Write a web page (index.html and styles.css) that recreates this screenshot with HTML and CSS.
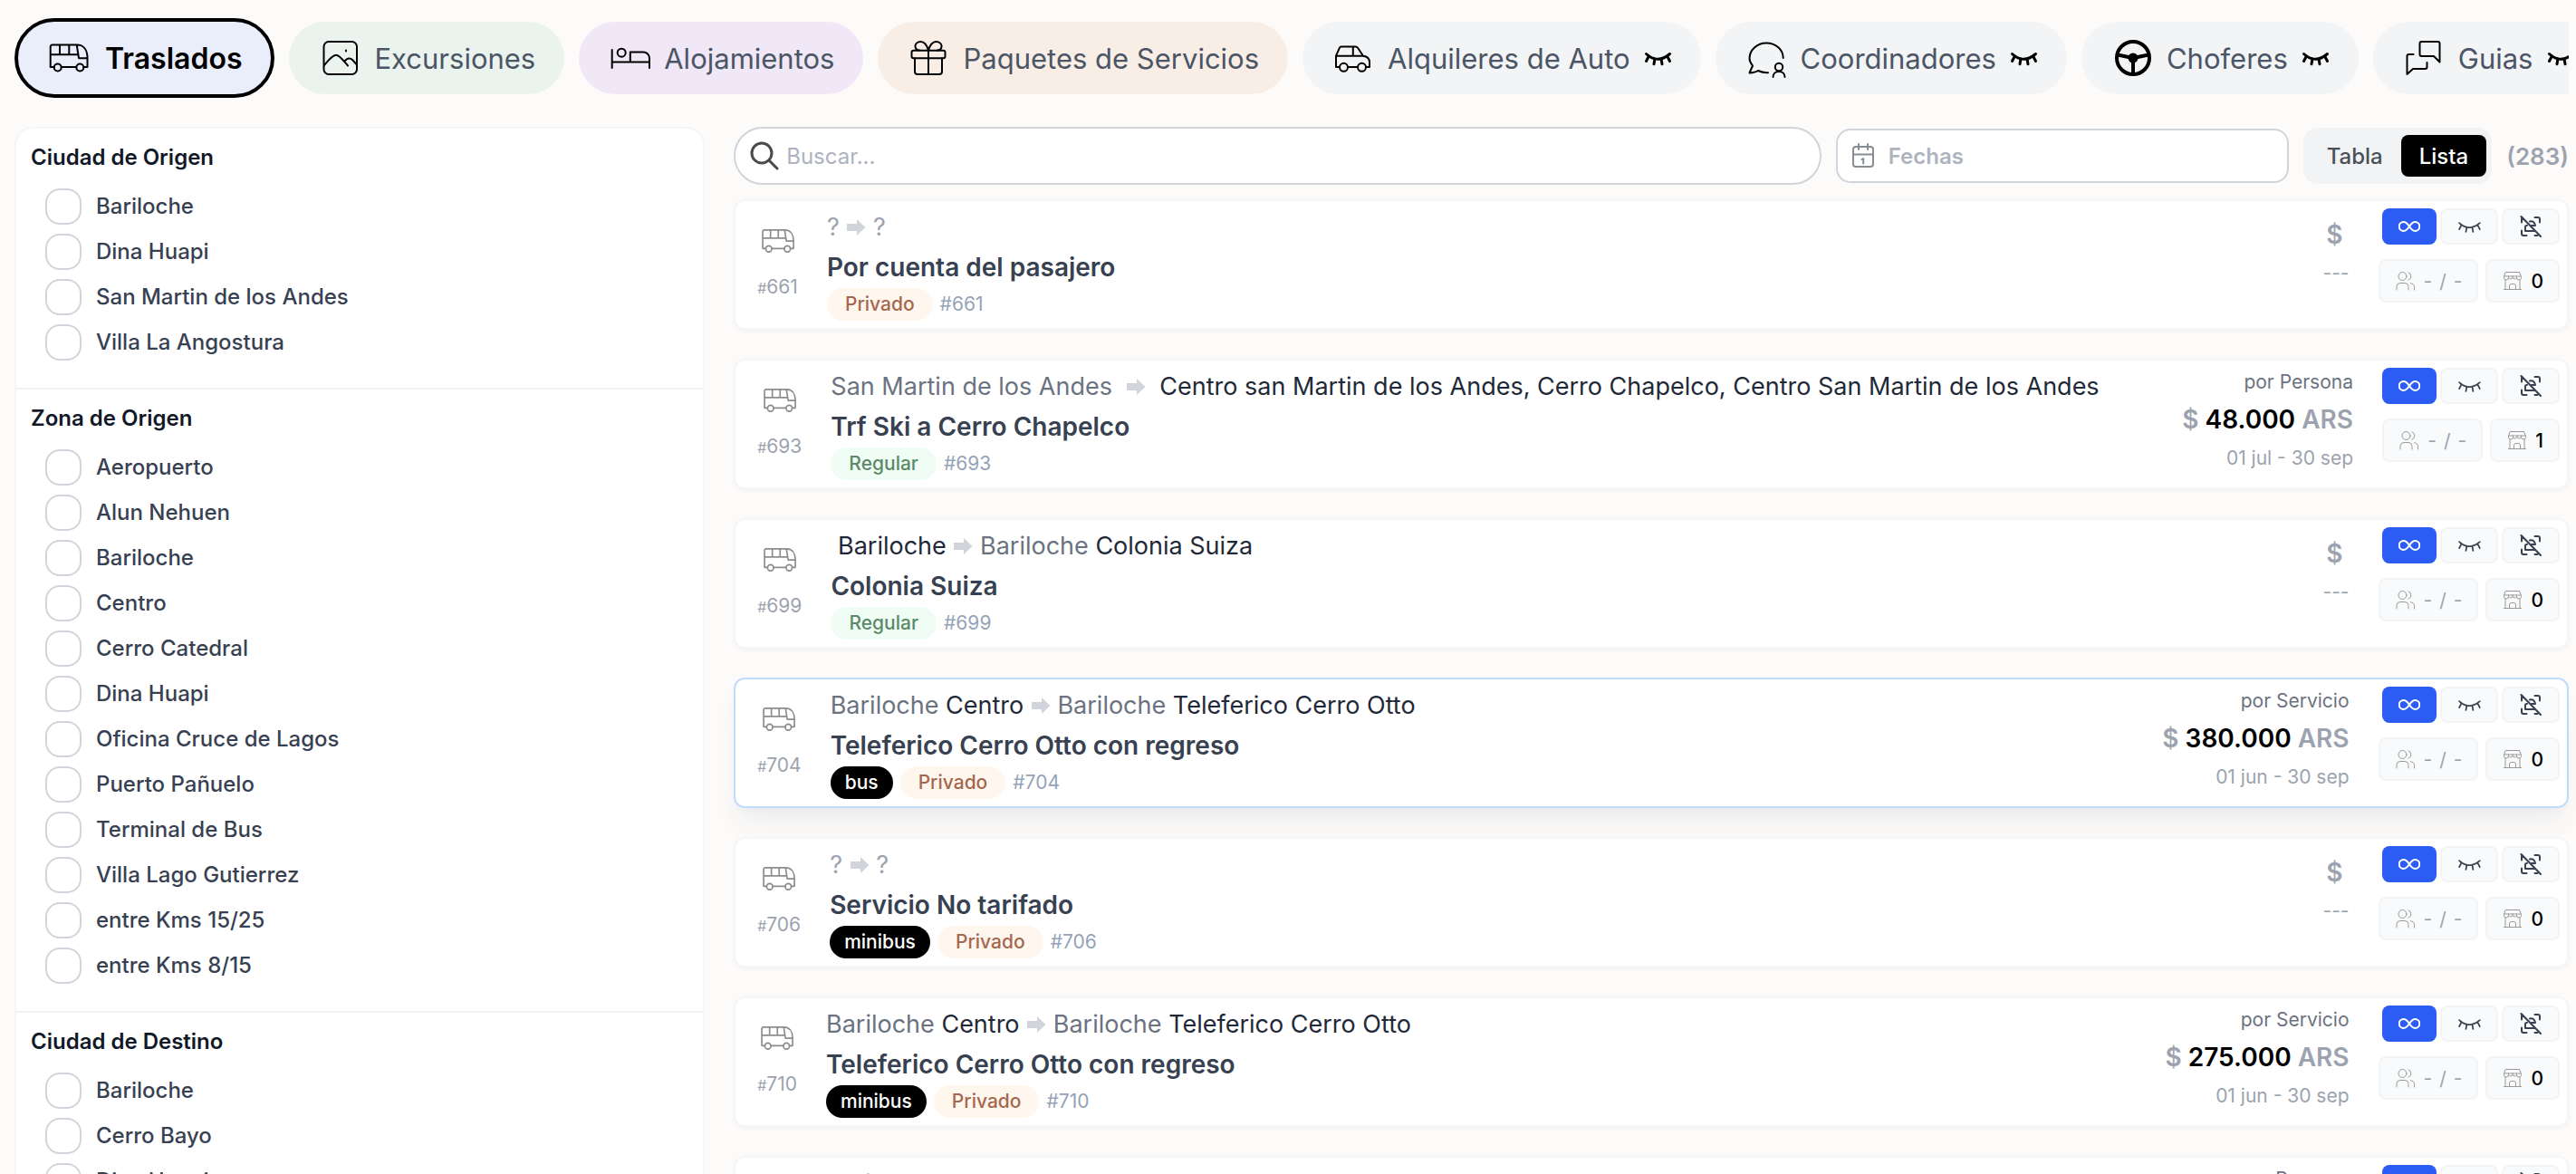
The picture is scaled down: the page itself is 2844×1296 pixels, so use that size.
FILE: index.html
```html
<!DOCTYPE html>
<html lang="es">
<head>
<meta charset="utf-8">
<meta name="viewport" content="width=device-width, initial-scale=1">
<title>Traslados</title>
<link rel="stylesheet" href="styles.css">
</head>
<body>
<svg class="sprite" aria-hidden="true">
  <symbol id="bus" viewBox="0 0 48 48"><path d="M7.7 34H3.7V11.5a2 2 0 0 1 2-2H33c8 0 11.5 6.500 11.500 14.500v10h-4.200M15.700 34h16.600M3.700 20.300h30.500M14 9.500v10.800M24.300 9.500v10.800M32.700 9.500l2.300 14.700h9.500"/><circle cx="11.700" cy="34.500" r="4"/><circle cx="36.300" cy="34.500" r="4"/></symbol>
  <symbol id="image" viewBox="0 0 48 48"><rect x="6.500" y="6" width="36.500" height="36" rx="5.500"/><path d="M7 32c4-5 9-11.300 13-11.300S29 28 33 32.500M29.500 27.500c3-3.500 6-4 8.500-1.500l5 5.500"/><path d="M31 15.500v1"/></symbol>
  <symbol id="bed" viewBox="0 0 48 48"><path d="M4.700 15v20M4.700 28.500H46M24.800 28.500V17.500h14.500a6.700 6.700 0 0 1 6.700 6.700V35"/><circle cx="15.200" cy="18.200" r="4.500"/></symbol>
  <symbol id="gift" viewBox="0 0 48 48"><rect x="5.500" y="15.800" width="37" height="8.400" rx="2"/><path d="M9 24.200V39a3 3 0 0 0 3 3h24a3 3 0 0 0 3-3V24.200M24 15.800V42M24 15.500C22 9 19 6 15.500 6S9 8.500 9.500 11.500s3 4 4.500 4M24 15.500C26 9 29 6 32.500 6S39 8.500 38.500 11.500s-3 4-4.500 4"/></symbol>
  <symbol id="car" viewBox="0 0 48 48"><path d="M8.500 34H5V21.700l4-9a2 2 0 0 1 2-1.300h15.500a3 3 0 0 1 2.500 1.300l6 9c4 .5 7 3 7 7V34h-3.500M18.500 34h10M5 21.700h30M23.800 11.400v10.300"/><circle cx="13.500" cy="34.300" r="4.500"/><circle cx="33.500" cy="34.300" r="4.500"/></symbol>
  <symbol id="coordinator" viewBox="0 0 48 48"><path d="M42.700 24C42.500 14 34 7.500 24 7.500S5.500 15 5.500 24.500c0 3 1.500 5.500 3.500 8L5.500 40.500c4-.2 7-.8 9.500-2.500 3 1.500 6.500 2.500 11 2.200M31.500 45c0-3.500 2.500-6 6.500-6s6.500 2.500 6.500 6"/><circle cx="38" cy="34" r="4.200"/></symbol>
  <symbol id="wheel" viewBox="0 0 48 48"><circle cx="25" cy="24" r="18" stroke-width="4"/><circle cx="25" cy="24" r="5.500" fill="currentColor" stroke="none"/><path stroke-width="4" d="M8 20.500l13 2.800M42 20.500l-13 2.800M25 27v14"/></symbol>
  <symbol id="chat" viewBox="0 0 48 48"><path d="M21.500 6H39.500a2 2 0 0 1 2 2v20.500L35 22H21.500a2 2 0 0 1-2-2V8a2 2 0 0 1 2-2zM12.500 20H7.500a2 2 0 0 0-2 2v20L12 36h13.500a2 2 0 0 0 2-2v-5"/></symbol>
  <symbol id="eye-off" viewBox="0 0 32 32"><path d="M3.500 11.500q12.500 11.500 26 0M6.500 13.800L3.500 19.500M13 16.700l-1 6M20 16.700l1 6M26.500 13.800l3 5.700"/></symbol>
  <symbol id="search" viewBox="0 0 32 32"><circle cx="13" cy="13" r="11"/><path d="M21 21l9 9"/></symbol>
  <symbol id="calendar" viewBox="0 0 28 28"><rect x="3" y="4" width="22" height="22" rx="3"/><path d="M3 12.500h22M9 1v6M19 1v6M12.500 18l1.700-1v5.500"/></symbol>
  <symbol id="infinity" viewBox="0 0 24 24"><path d="M12 12c-2-3-4-5-6.300-5a5 5 0 0 0 0 10c2.300 0 4.300-2 6.300-5s4-5 6.300-5a5 5 0 0 1 0 10c-2.300 0-4.300-2-6.300-5z"/></symbol>
  <symbol id="no-scan" viewBox="0 0 24 24"><path d="M1.500 1l21.500 22M16.500 2h3.500a2 2 0 0 1 2 2v3.500M2 16.500V20a2 2 0 0 0 2 2h3.500M2 2.500v5M16.500 22h3M11 6.500c3-1 5.500 1 6 4.500h-4M8 11h-.5a1.500 1.500 0 0 0-1.500 1.500v4.500h10.500"/></symbol>
  <symbol id="people" viewBox="0 0 24 24"><circle cx="8.500" cy="7" r="4.500"/><path d="M2 22v-3.500a4 4 0 0 1 4-4h5a4 4 0 0 1 4 4V22M15 2.800a4.500 4.500 0 0 1 0 8.400M17.500 14.700a4 4 0 0 1 4 4V22"/></symbol>
  <symbol id="store" viewBox="0 0 24 24"><path d="M4.500 2.500h15l2 5v1a2.500 2.500 0 0 1-5 0 2.500 2.500 0 0 1-4.500 0 2.500 2.500 0 0 1-4.500 0 2.500 2.500 0 0 1-5 0v-1zM2.500 7h19M7.500 7v2M12 7v2M16.500 7v2M4 11.500V21.500M20 11.500V21.500M2.500 21.500h19M8.500 21v-3.500a2 2 0 0 1 2-2h3a2 2 0 0 1 2 2V21"/></symbol>
  <symbol id="arrow" viewBox="0 0 22 18"><path d="M1 5h11V0l9.500 9-9.500 9v-5H1z"/></symbol>
</svg>

<nav class="tabs" aria-label="Servicios">
  <button class="tab tab-blue tab-active" type="button"><svg class="tab-icon"><use href="#bus"/></svg>Traslados</button>
  <button class="tab tab-green" type="button"><svg class="tab-icon"><use href="#image"/></svg>Excursiones</button>
  <button class="tab tab-purple" type="button"><svg class="tab-icon"><use href="#bed"/></svg>Alojamientos</button>
  <button class="tab tab-orange" type="button"><svg class="tab-icon"><use href="#gift"/></svg>Paquetes de Servicios</button>
  <button class="tab" type="button"><svg class="tab-icon"><use href="#car"/></svg>Alquileres de Auto<svg class="tab-eye"><use href="#eye-off"/></svg></button>
  <button class="tab" type="button"><svg class="tab-icon"><use href="#coordinator"/></svg>Coordinadores<svg class="tab-eye"><use href="#eye-off"/></svg></button>
  <button class="tab" type="button"><svg class="tab-icon"><use href="#wheel"/></svg>Choferes<svg class="tab-eye"><use href="#eye-off"/></svg></button>
  <button class="tab" type="button"><svg class="tab-icon"><use href="#chat"/></svg>Guias<svg class="tab-eye"><use href="#eye-off"/></svg></button>
</nav>

<div class="layout">
  <aside class="filters">
    <section class="filter">
      <h2>Ciudad de Origen</h2>
      <label><input type="checkbox">Bariloche</label>
      <label><input type="checkbox">Dina Huapi</label>
      <label><input type="checkbox">San Martin de los Andes</label>
      <label><input type="checkbox">Villa La Angostura</label>
    </section>
    <section class="filter">
      <h2>Zona de Origen</h2>
      <label><input type="checkbox">Aeropuerto</label>
      <label><input type="checkbox">Alun Nehuen</label>
      <label><input type="checkbox">Bariloche</label>
      <label><input type="checkbox">Centro</label>
      <label><input type="checkbox">Cerro Catedral</label>
      <label><input type="checkbox">Dina Huapi</label>
      <label><input type="checkbox">Oficina Cruce de Lagos</label>
      <label><input type="checkbox">Puerto Pañuelo</label>
      <label><input type="checkbox">Terminal de Bus</label>
      <label><input type="checkbox">Villa Lago Gutierrez</label>
      <label><input type="checkbox">entre Kms 15/25</label>
      <label><input type="checkbox">entre Kms 8/15</label>
    </section>
    <section class="filter">
      <h2>Ciudad de Destino</h2>
      <label><input type="checkbox">Bariloche</label>
      <label><input type="checkbox">Cerro Bayo</label>
      <label><input type="checkbox">Dina Huapi</label>
    </section>
  </aside>

  <main class="results">
    <div class="toolbar">
      <label class="search"><svg class="search-icon"><use href="#search"/></svg><input type="text" placeholder="Buscar..." aria-label="Buscar"></label>
      <label class="dates"><svg class="dates-icon"><use href="#calendar"/></svg><input type="text" placeholder="Fechas" aria-label="Fechas"></label>
      <div class="toggle"><button type="button">Tabla</button><button class="on" type="button">Lista</button></div>
      <span class="count">(283)</span>
    </div>

    <article class="card">
      <div class="card-id"><svg><use href="#bus"/></svg><span><small>#</small>661</span></div>
      <div class="card-body">
        <p class="route"><i>?</i> <svg><use href="#arrow"/></svg> <i>?</i></p>
        <h3>Por cuenta del pasajero</h3>
        <div class="tags"><span class="tag private">Privado</span><span class="ref">#661</span></div>
      </div>
      <div class="price price-empty"><p class="amount">$ </p><p class="period">---</p></div>
      <div class="actions">
        <div class="row"><button class="act primary" type="button" aria-label="Sin límite"><svg><use href="#infinity"/></svg></button><button class="act act-eye" type="button" aria-label="Oculto"><svg><use href="#eye-off"/></svg></button><button class="act" type="button" aria-label="Sin escaneo"><svg><use href="#no-scan"/></svg></button></div>
        <div class="row stats"><span class="stat"><svg><use href="#people"/></svg><span>-</span><span>/</span><span>-</span></span><span class="stat stat-dark"><svg><use href="#store"/></svg>0</span></div>
      </div>
    </article>

    <article class="card">
      <div class="card-id"><svg><use href="#bus"/></svg><span><small>#</small>693</span></div>
      <div class="card-body">
        <p class="route"><em>San Martin de los Andes</em>  <svg><use href="#arrow"/></svg>  Centro san Martin de los Andes, Cerro Chapelco, Centro San Martin de los Andes</p>
        <h3>Trf Ski a Cerro Chapelco</h3>
        <div class="tags"><span class="tag regular">Regular</span><span class="ref">#693</span></div>
      </div>
      <div class="price"><p class="unit">por Persona</p><p class="amount">$ <b>48.000</b> ARS</p><p class="period">01 jul - 30 sep</p></div>
      <div class="actions">
        <div class="row"><button class="act primary" type="button" aria-label="Sin límite"><svg><use href="#infinity"/></svg></button><button class="act act-eye" type="button" aria-label="Oculto"><svg><use href="#eye-off"/></svg></button><button class="act" type="button" aria-label="Sin escaneo"><svg><use href="#no-scan"/></svg></button></div>
        <div class="row stats"><span class="stat"><svg><use href="#people"/></svg><span>-</span><span>/</span><span>-</span></span><span class="stat stat-dark"><svg><use href="#store"/></svg>1</span></div>
      </div>
    </article>

    <article class="card">
      <div class="card-id"><svg><use href="#bus"/></svg><span><small>#</small>699</span></div>
      <div class="card-body">
        <p class="route"> Bariloche <svg><use href="#arrow"/></svg> <em>Bariloche</em> Colonia Suiza</p>
        <h3>Colonia Suiza</h3>
        <div class="tags"><span class="tag regular">Regular</span><span class="ref">#699</span></div>
      </div>
      <div class="price price-empty"><p class="amount">$ </p><p class="period">---</p></div>
      <div class="actions">
        <div class="row"><button class="act primary" type="button" aria-label="Sin límite"><svg><use href="#infinity"/></svg></button><button class="act act-eye" type="button" aria-label="Oculto"><svg><use href="#eye-off"/></svg></button><button class="act" type="button" aria-label="Sin escaneo"><svg><use href="#no-scan"/></svg></button></div>
        <div class="row stats"><span class="stat"><svg><use href="#people"/></svg><span>-</span><span>/</span><span>-</span></span><span class="stat stat-dark"><svg><use href="#store"/></svg>0</span></div>
      </div>
    </article>

    <article class="card card-active">
      <div class="card-id"><svg><use href="#bus"/></svg><span><small>#</small>704</span></div>
      <div class="card-body">
        <p class="route"><em>Bariloche</em> Centro <svg><use href="#arrow"/></svg> <em>Bariloche</em> Teleferico Cerro Otto</p>
        <h3>Teleferico Cerro Otto con regreso</h3>
        <div class="tags"><span class="tag vehicle">bus</span><span class="tag private">Privado</span><span class="ref">#704</span></div>
      </div>
      <div class="price"><p class="unit">por Servicio</p><p class="amount">$ <b>380.000</b> ARS</p><p class="period">01 jun - 30 sep</p></div>
      <div class="actions">
        <div class="row"><button class="act primary" type="button" aria-label="Sin límite"><svg><use href="#infinity"/></svg></button><button class="act act-eye" type="button" aria-label="Oculto"><svg><use href="#eye-off"/></svg></button><button class="act" type="button" aria-label="Sin escaneo"><svg><use href="#no-scan"/></svg></button></div>
        <div class="row stats"><span class="stat"><svg><use href="#people"/></svg><span>-</span><span>/</span><span>-</span></span><span class="stat stat-dark"><svg><use href="#store"/></svg>0</span></div>
      </div>
    </article>

    <article class="card">
      <div class="card-id"><svg><use href="#bus"/></svg><span><small>#</small>706</span></div>
      <div class="card-body">
        <p class="route"><i>?</i> <svg><use href="#arrow"/></svg> <i>?</i></p>
        <h3>Servicio No tarifado</h3>
        <div class="tags"><span class="tag vehicle">minibus</span><span class="tag private">Privado</span><span class="ref">#706</span></div>
      </div>
      <div class="price price-empty"><p class="amount">$ </p><p class="period">---</p></div>
      <div class="actions">
        <div class="row"><button class="act primary" type="button" aria-label="Sin límite"><svg><use href="#infinity"/></svg></button><button class="act act-eye" type="button" aria-label="Oculto"><svg><use href="#eye-off"/></svg></button><button class="act" type="button" aria-label="Sin escaneo"><svg><use href="#no-scan"/></svg></button></div>
        <div class="row stats"><span class="stat"><svg><use href="#people"/></svg><span>-</span><span>/</span><span>-</span></span><span class="stat stat-dark"><svg><use href="#store"/></svg>0</span></div>
      </div>
    </article>

    <article class="card">
      <div class="card-id"><svg><use href="#bus"/></svg><span><small>#</small>710</span></div>
      <div class="card-body">
        <p class="route"><em>Bariloche</em> Centro <svg><use href="#arrow"/></svg> <em>Bariloche</em> Teleferico Cerro Otto</p>
        <h3>Teleferico Cerro Otto con regreso</h3>
        <div class="tags"><span class="tag vehicle">minibus</span><span class="tag private">Privado</span><span class="ref">#710</span></div>
      </div>
      <div class="price"><p class="unit">por Servicio</p><p class="amount">$ <b>275.000</b> ARS</p><p class="period">01 jun - 30 sep</p></div>
      <div class="actions">
        <div class="row"><button class="act primary" type="button" aria-label="Sin límite"><svg><use href="#infinity"/></svg></button><button class="act act-eye" type="button" aria-label="Oculto"><svg><use href="#eye-off"/></svg></button><button class="act" type="button" aria-label="Sin escaneo"><svg><use href="#no-scan"/></svg></button></div>
        <div class="row stats"><span class="stat"><svg><use href="#people"/></svg><span>-</span><span>/</span><span>-</span></span><span class="stat stat-dark"><svg><use href="#store"/></svg>0</span></div>
      </div>
    </article>

    <article class="card">
      <div class="card-id"><svg><use href="#bus"/></svg><span><small>#</small>712</span></div>
      <div class="card-body">
        <p class="route"><em>Bariloche</em> Centro <svg><use href="#arrow"/></svg>  Cerro Catedral</p>
        <h3>Cerro Catedral</h3>
        <div class="tags"><span class="tag regular">Regular</span><span class="ref">#712</span></div>
      </div>
      <div class="price"><p class="unit">por Persona</p><p class="amount">$ <b>48.000</b> ARS</p><p class="period">01 jun - 30 sep</p></div>
      <div class="actions">
        <div class="row"><button class="act primary" type="button" aria-label="Sin límite"><svg><use href="#infinity"/></svg></button><button class="act act-eye" type="button" aria-label="Oculto"><svg><use href="#eye-off"/></svg></button><button class="act" type="button" aria-label="Sin escaneo"><svg><use href="#no-scan"/></svg></button></div>
        <div class="row stats"><span class="stat"><svg><use href="#people"/></svg><span>-</span><span>/</span><span>-</span></span><span class="stat stat-dark"><svg><use href="#store"/></svg>0</span></div>
      </div>
    </article>
  </main>
</div>
</body>
</html>
```
FILE: styles.css
```css
* { box-sizing: border-box; }

body {
  margin: 0;
  height: 100vh;
  padding: 20px 8px 0 16px;
  overflow: hidden;
  background: #fcfbf9;
  color: #1f2937;
  font-family: Inter, "Liberation Sans", sans-serif;
  font-size: 24px;
}

h2, h3, p { margin: 0; }
button, input { font: inherit; color: inherit; }
button { border: 0; padding: 0; background: none; cursor: pointer; }
svg { display: block; flex: none; fill: none; stroke: currentColor; stroke-width: 2; stroke-linecap: round; stroke-linejoin: round; }
.sprite { position: absolute; width: 0; height: 0; }

/* Service tabs */
.tabs { display: flex; align-items: center; gap: 16px; overflow: hidden; }
.tab {
  display: flex;
  flex: none;
  align-items: center;
  gap: 14px;
  height: 80px;
  padding: 0 32px;
  border-radius: 44px;
  background: #f2f4f6;
  color: #4b5565;
  font-size: 31px;
  white-space: nowrap;
}
.tab-blue { background: #eaeefa; }
.tab-green { background: #ebf3ee; }
.tab-purple { background: #f0e7f7; }
.tab-orange { background: #f9eee6; }
.tab-active { gap: 16px; height: 88px; border: 4px solid #000; color: #000; font-size: 32px; font-weight: 600; }
.tab-icon { width: 48px; height: 48px; color: #000; }
.tab-eye { width: 32px; height: 32px; color: #000; stroke-width: 3; }

.layout { display: grid; grid-template-columns: 38fr 101fr; gap: 32px; margin-top: 32px; }

/* Filters */
.filters { border: 2px solid #f5f5fa; border-radius: 20px; background: #fff; }
.filter { display: flex; flex-direction: column; gap: 10px; padding: 14px 16px 30px; }
.filter + .filter { border-top: 2px solid #f1f2f5; }
.filter h2 { margin-bottom: 6px; color: #111827; font-size: 24px; font-weight: 600; line-height: 36px; }
.filter label { display: flex; align-items: center; gap: 16px; margin-left: 16px; color: #374151; font-weight: 500; line-height: 40px; }
.filter input { appearance: none; width: 40px; height: 40px; margin: 0; border: 2px solid #d1d5db; border-radius: 16px; background: #fff; }

/* Toolbar */
.results { display: flex; flex-direction: column; gap: 32px; min-width: 0; }
.toolbar { display: flex; align-items: center; gap: 16px; margin-bottom: -16px; }
.toolbar input { flex: 1; min-width: 0; padding: 0; border: 0; outline: 0; background: none; }
.toolbar input::placeholder { color: #adb3bf; opacity: 1; }
.search { display: flex; flex: 1; align-items: center; gap: 8px; height: 64px; padding: 0 16px; border: 2px solid #d1d5db; border-radius: 32px; background: #fff; }
.search-icon { width: 32px; height: 32px; color: #4a4a4a; stroke-width: 3; }
.dates { display: flex; flex: 0 1 500px; align-items: center; gap: 14px; height: 60px; padding: 0 14px; border: 2px solid #d1d5db; border-radius: 16px; background: #fff; font-weight: 600; }
.dates-icon { width: 28px; height: 28px; color: #868e96; }
.toggle { display: flex; align-items: center; height: 62px; padding: 0 6px; border-radius: 16px; background: #f1f3f5; color: #495057; font-weight: 500; }
.toggle button { height: 46px; padding: 0 20px; border-radius: 8px; }
.toggle .on { background: #000; color: #fff; }
.count { color: #9ca3af; font-size: 26px; font-weight: 600; }

/* Result cards */
.card {
  display: flex;
  align-items: flex-start;
  gap: 32px;
  height: 144px;
  padding: 8px 8px 8px 24px;
  border: 2px solid #f6f6fa;
  border-radius: 12px;
  background: #fff;
  box-shadow: 0 2px 4px rgba(90, 80, 160, .05);
}
.card-active { border-color: #bfdbfe; box-shadow: 0 20px 30px -6px rgba(60, 50, 120, .07), 0 8px 12px -8px rgba(60, 50, 120, .07); }
.card-id { display: flex; flex-direction: column; align-items: center; gap: 16px; padding-top: 16px; color: #9ca3af; font-size: 21px; line-height: 30px; }
.card-id svg { width: 40px; height: 40px; color: #8c8c8c; }
.card-id small { font-size: 16px; }
.card-body { flex: 1; min-width: 0; }
.route { color: #1f2937; font-size: 27px; line-height: 42px; white-space: pre; }
.route em { color: #6b7280; font-style: normal; }
.route i { color: #9ca3af; font-style: normal; }
.route svg { display: inline-block; width: 22px; height: 18px; fill: #d1d5db; stroke: none; }
.card h3 { color: #374151; font-size: 28px; font-weight: 600; line-height: 46px; }
.tags { display: flex; align-items: center; gap: 8px; font-size: 21px; line-height: 36px; }
.tag { padding: 0 20px; border-radius: 18px; font-weight: 500; }
.private { background: #fff7ed; color: #a5674f; }
.regular { background: #f0fdf4; color: #5b8a68; }
.vehicle { padding: 0 16px; background: #000; color: #fff; }
.ref { color: #94a3b8; }

.price { color: #9ca3af; font-size: 21px; text-align: right; white-space: pre; }
.price-empty { padding-top: 4px; }
.unit { color: #6b7280; line-height: 32px; }
.amount { font-size: 28px; font-weight: 600; line-height: 50px; }
.amount b { color: #000; font-weight: 600; }
.period { line-height: 36px; }

.actions { display: flex; flex-direction: column; align-items: flex-end; gap: 16px; }
.row { display: flex; gap: 4px; }
.stats { gap: 8px; }
.act { display: flex; align-items: center; justify-content: center; width: 64px; height: 40px; border: 2px solid #f3f4f6; border-radius: 8px; background: #f9fafb; color: #374151; }
.act svg { width: 24px; height: 24px; }
.act-eye svg { width: 28px; height: 28px; }
.primary { width: 60px; border: 0; background: #2c5cf4; color: #fff; }
.stat { display: flex; align-items: center; gap: 8px; height: 48px; padding: 0 16px; border: 2px solid #f3f4f6; border-radius: 8px; background: #f9fafb; color: #9ca3af; font-size: 21px; }
.stat svg { width: 24px; height: 24px; color: #999; stroke-width: 1; }
.stat-dark { color: #000; font-weight: 500; }
```
